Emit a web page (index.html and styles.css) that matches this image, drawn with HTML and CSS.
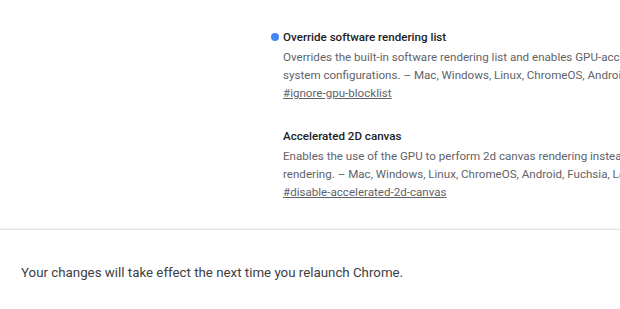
FILE: index.html
```html
<!DOCTYPE html>
<html lang="en">
<head>
    <meta charset="UTF-8">
    <meta name="viewport" content="width=device-width, initial-scale=1.0">
    <title>Experiments</title>
    <link rel="stylesheet" href="styles.css">
</head>
<body>
    <div class="page">
        <main class="experiments">
            <div class="experiment">
                <span class="dot"></span>
                <h3 class="name">Override software rendering list</h3>
                <p class="desc">Overrides the built-in software rendering list and enables GPU-acceleration on unsupported system configurations. &ndash; Mac, Windows, Linux, ChromeOS, Android, Fuchsia, Lacros</p>
                <a class="permalink" href="#ignore-gpu-blocklist">#ignore-gpu-blocklist</a>
            </div>

            <div class="experiment">
                <span></span>
                <h3 class="name">Accelerated 2D canvas</h3>
                <p class="desc">Enables the use of the GPU to perform 2d canvas rendering instead of using software rendering. &ndash; Mac, Windows, Linux, ChromeOS, Android, Fuchsia, Lacros</p>
                <a class="permalink" href="#disable-accelerated-2d-canvas">#disable-accelerated-2d-canvas</a>
            </div>

            <div class="experiment">
                <span></span>
                <h3 class="name">Partial swap</h3>
                <p class="desc">Sets partial swap behavior. &ndash; Mac, Windows, Linux, ChromeOS, Android, Fuchsia, Lacros</p>
                <a class="permalink" href="#ui-disable-partial-swap">#ui-disable-partial-swap</a>
            </div>
        </main>

        <footer class="footer">
            <p>Your changes will take effect the next time you relaunch Chrome.</p>
        </footer>
    </div>
</body>
</html>
```

FILE: styles.css
```css
body {
    margin: 0;
    font-family: Roboto, "Liberation Sans", sans-serif;
    background-color: #fff;
    color: #202124;
    overflow: hidden;
}

.page {
    display: flex;
    flex-direction: column;
    height: 309px;
}

.experiments {
    flex: 1;
    overflow: hidden;
    padding: 28px 0 0 271px;
    width: 500px;
}

.experiment {
    display: grid;
    grid-template-columns: 12px 1fr;
    margin-bottom: 25px;
    font-size: 11.6px;
    line-height: 18px;
}

.experiment > * {
    grid-column: 2;
}

.experiment > span {
    grid-column: 1;
    grid-row: 1;
}

.dot {
    width: 8px;
    height: 8px;
    margin-top: 5px;
    border-radius: 50%;
    background-color: #4285f4;
}

.name {
    margin: 0 0 2px;
    font-size: 11.6px;
    font-weight: 500;
    color: #202124;
}

.desc {
    margin: 0;
    color: #5f6368;
    width: 470px;
}

.permalink {
    color: #5f6368;
    text-decoration: underline;
    justify-self: start;
}

.footer {
    height: 80px;
    flex-shrink: 0;
    border-top: 1px solid #e3e3e3;
    box-shadow: 0 -1px 2px rgba(0, 0, 0, 0.06);
    background-color: #fff;
    display: flex;
    align-items: center;
    padding: 5px 0 0 21px;
    box-sizing: border-box;
    position: relative;
}

.footer p {
    margin: 0;
    font-size: 13.3px;
    color: #3c4043;
}
```
